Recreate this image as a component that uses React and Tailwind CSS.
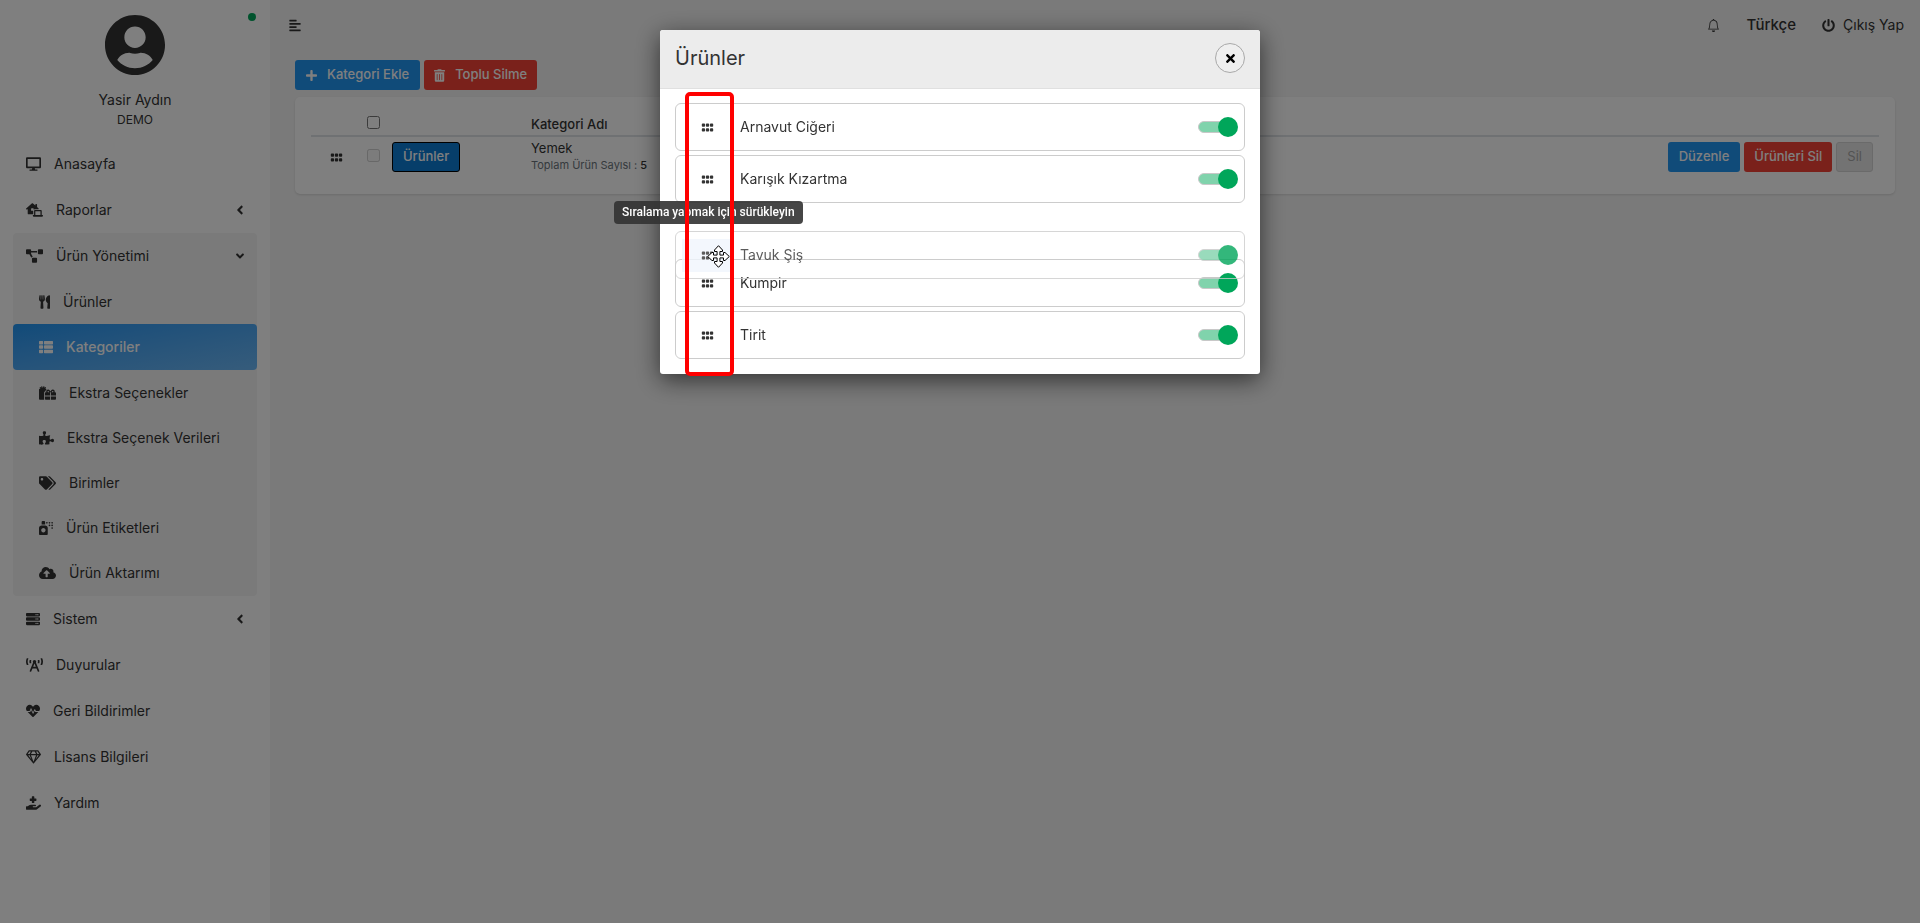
import { useState } from 'react';

import {
  FaDesktop, FaLaptopHouse, FaProjectDiagram, FaUtensils, FaThList, FaGifts, FaPuzzlePiece, FaTags,
  FaSprayCan, FaCloudUploadAlt, FaServer, FaBroadcastTower, FaHeartbeat, FaRegGem, FaHandHoldingMedical,
  FaAngleLeft, FaAngleDown, FaAlignLeft, FaPowerOff, FaPlus, FaTrashAlt, FaGripHorizontal, FaUserCircle, FaTimes,
} from 'react-icons/fa';
import { BsBell } from 'react-icons/bs';

const productLinks = [
  { label: 'Ürünler', icon: FaUtensils, size: 'w-[11px]' },
  { label: 'Kategoriler', icon: FaThList, size: 'w-[14px]', active: true },
  { label: 'Ekstra Seçenekler', icon: FaGifts, size: 'w-[17px]' },
  { label: 'Ekstra Seçenek Verileri', icon: FaPuzzlePiece, size: 'w-[15px]' },
  { label: 'Birimler', icon: FaTags, size: 'w-[17px]' },
  { label: 'Ürün Etiketleri', icon: FaSprayCan, size: 'w-[14px]' },
  { label: 'Ürün Aktarımı', icon: FaCloudUploadAlt, size: 'w-[17px]' },
];

const menu = [
  { label: 'Anasayfa', icon: FaDesktop, size: 'w-[15px]' },
  { label: 'Raporlar', icon: FaLaptopHouse, size: 'w-[17px]', more: true },
  { label: 'Ürün Yönetimi', icon: FaProjectDiagram, size: 'w-[17px]', children: productLinks },
  { label: 'Sistem', icon: FaServer, size: 'w-[14px]', more: true },
  { label: 'Duyurular', icon: FaBroadcastTower, size: 'w-[17px]' },
  { label: 'Geri Bildirimler', icon: FaHeartbeat, size: 'w-[14px]' },
  { label: 'Lisans Bilgileri', icon: FaRegGem, size: 'w-[15px]' },
  { label: 'Yardım', icon: FaHandHoldingMedical, size: 'w-[15px]' },
];

const products = [
  { name: 'Arnavut Ciğeri' },
  { name: 'Karışık Kızartma' },
  { name: 'Tavuk Şiş', dragging: true },
  { name: 'Kumpir' },
  { name: 'Tirit' },
];

const MenuLink = ({ item }) => {
  const Icon = item.icon;
  return (
    <a href="#" className="flex h-[46px] items-center gap-[13px] px-[13px]">
      <Icon className={`h-[14px] ${item.size}`} />
      <span className="flex-1">{item.label}</span>
      {item.more && <FaAngleLeft className="h-[14px] w-2" />}
      {item.children && <FaAngleDown className="h-[14px] w-2" />}
    </a>
  );
};

const SubLink = ({ item }) => {
  const Icon = item.icon;
  const look = item.active
    ? 'h-[46px] rounded bg-linear-to-br from-[#2196f3] to-[#6cb8f6] font-medium text-white'
    : 'h-[45px]';
  return (
    <a href="#" className={`flex items-center gap-[13px] px-[26px] ${look}`}>
      <Icon className={`h-[14px] ${item.size}`} />
      {item.label}
    </a>
  );
};

const Sidebar = () => (
  <aside className="relative w-[270px] shrink-0 bg-white px-[13px] text-sm">
    <span className="absolute right-[14px] top-[13px] size-2 rounded-full bg-[#00a65a]"></span>
    <div className="flex flex-col items-center pb-[11px] pt-[14px]">
      <FaUserCircle className="size-[62px]" />
      <p className="mt-[14px] leading-5">Yasir Aydın</p>
      <p className="text-xs leading-5">DEMO</p>
    </div>
    <ul>
      {menu.map((item) => (
        <li key={item.label} className={item.children ? 'rounded bg-[#f5f5f5]' : ''}>
          <MenuLink item={item} />
          {item.children && (
            <ul className="pb-px">
              {item.children.map((child) => (
                <li key={child.label}><SubLink item={child} /></li>
              ))}
            </ul>
          )}
        </li>
      ))}
    </ul>
  </aside>
);

const Topbar = () => (
  <header className="flex h-[50px] items-center pl-[19px] pr-4">
    <button type="button" aria-label="Menü"><FaAlignLeft className="h-[13px] w-3" /></button>
    <div className="ml-auto flex items-center">
      <button type="button" aria-label="Bildirimler"><BsBell className="size-[13px]" /></button>
      <button type="button" className="ml-[26px] text-[15px] font-medium">Türkçe</button>
      <a href="#" className="ml-[26px] flex items-center gap-2 text-sm">
        <FaPowerOff className="size-[13px]" />
        Çıkış Yap
      </a>
    </div>
  </header>
);

const CategoryTable = () => (
  <div className="rounded-[5px] bg-white px-4 pb-[17px] pt-4 shadow-sm">
    <table className="w-full text-[13px]">
      <thead>
        <tr className="h-[23px] border-b-2 border-[#dee2e6] text-left">
          <th className="w-[50px]"></th>
          <th className="w-[25px] text-center align-top">
            <input type="checkbox" aria-label="Tümünü seç" className="mt-[3px] block mx-auto size-[13px]" />
          </th>
          <th className="w-[139px]"></th>
          <th className="px-1.5 align-top font-medium leading-[22px]">Kategori Adı</th>
          <th></th>
        </tr>
      </thead>
      <tbody>
        <tr className="h-[41px]">
          <td><FaGripHorizontal className="mx-auto size-[13px]" /></td>
          <td className="align-top">
            <input type="checkbox" disabled aria-label="Yemek" className="mt-3 block mx-auto size-[13px]" />
          </td>
          <td className="px-1.5">
            <button type="button" className="h-[30px] rounded-[3px] border border-black bg-[#0c7cd5] px-[10px] font-medium text-white">Ürünler</button>
          </td>
          <td className="px-1.5 align-top">
            <p className="pt-0.5 leading-[18px]">Yemek</p>
            <p className="text-[11px] leading-4 text-[#6c757d]">Toplam Ürün Sayısı : <b className="font-medium text-[#333333]">5</b></p>
          </td>
          <td className="px-1.5">
            <div className="flex justify-end gap-1">
              <button type="button" className="h-[30px] rounded-[3px] bg-[#2196f3] px-[11px] font-medium text-white">Düzenle</button>
              <button type="button" className="h-[30px] rounded-[3px] bg-[#f44336] px-[10px] font-medium text-white">Ürünleri Sil</button>
              <button type="button" disabled className="h-[30px] rounded-[3px] border border-[#d4d4d4] bg-[#e6e6e6] px-[10px] text-[#a6a6a6]">Sil</button>
            </div>
          </td>
        </tr>
      </tbody>
    </table>
  </div>
);

const Toggle = ({ label }) => {
  const [on, setOn] = useState(true);
  return (
    <label className="relative flex h-5 w-10 items-center">
      <input
        type="checkbox"
        aria-label={label}
        checked={on}
        onChange={() => setOn(!on)}
        className="peer absolute inset-0 z-10 opacity-0"
      />
      <span className="h-3 w-9 rounded-full border border-[#c8c8c8] bg-[#e0e0e0] peer-checked:bg-[#80d3ac]"></span>
      <span className="absolute left-0 size-5 rounded-full bg-[#999999] peer-checked:left-5 peer-checked:bg-[#00a65a]"></span>
    </label>
  );
};

// arrows shown while a row is being moved
const MoveCursor = () => (
  <svg viewBox="0 0 23 23" className="pointer-events-none absolute left-[32px] top-[14px] z-30 size-[23px]">
    <path
      d="M11.5 .7 L15.5 5 V6.5 H12.9 V10.1 H16.5 V7.5 H18 L22.3 11.5 L18 15.5 H16.5 V12.9 H12.9 V16.5 H15.5 V18 L11.5 22.3 L7.5 18 V16.5 H10.1 V12.9 H6.5 V15.5 H5 L.7 11.5 L5 7.5 H6.5 V10.1 H10.1 V6.5 H7.5 V5 Z"
      fill="#fff"
      stroke="#000"
    />
  </svg>
);

const ProductRow = ({ product }) => {
  const { name, dragging } = product;
  return (
    <div className={`flex h-12 w-full items-center rounded-md border border-[#cccccc] px-1.5 ${dragging ? 'opacity-80' : ''}`}>
      <button
        type="button"
        aria-label={`${name} sırala`}
        className={`flex h-[33px] w-[50px] items-center justify-center ${dragging ? 'bg-[#f0f6fd]' : ''}`}
      >
        <FaGripHorizontal className="size-[13px]" />
      </button>
      <span className="ml-2 flex-1 text-sm">{name}</span>
      <Toggle label={name} />
    </div>
  );
};

const ProductsModal = () => (
  <div className="fixed inset-0 z-10 flex items-start justify-center bg-black/50 pt-[30px]">
    <div role="dialog" aria-label="Ürünler" className="relative w-[600px] rounded-[3px] bg-white shadow-[0_6px_24px_rgba(0,0,0,0.6)]">
      <div className="flex h-[59px] items-center justify-between rounded-t-[3px] border-b border-[#e0e0e0] bg-[#ececec] px-[15px] pb-0.5">
        <h2 className="text-xl leading-6">Ürünler</h2>
        <button type="button" aria-label="Kapat" className="flex size-[30px] items-center justify-center rounded-full border border-[#a9a9a9] bg-[#efefef] text-black">
          <FaTimes className="size-[13px]" />
        </button>
      </div>
      <ul className="flex flex-col gap-1 px-[15px] pb-[15px] pt-[14px]">
        {products.map((product) => (
          <li key={product.name} className={product.dragging ? 'relative h-12' : ''}>
            {product.dragging ? (
              <div className="absolute inset-x-0 top-6 z-10">
                <ProductRow product={product} />
                <MoveCursor />
              </div>
            ) : (
              <ProductRow product={product} />
            )}
          </li>
        ))}
      </ul>
      <div role="tooltip" className="absolute -left-[46px] top-[171px] whitespace-nowrap rounded bg-[#323232]/90 px-2 font-[Roboto,sans-serif] text-xs font-medium leading-[23px] text-white">
        Sıralama yapmak için sürükleyin
      </div>
      <div className="pointer-events-none absolute -bottom-0.5 left-[25px] top-[62px] z-20 w-[49px] rounded-[5px] border-4 border-[#ff0000]"></div>
    </div>
  </div>
);

export default function App() {
  return (
    <div className="flex min-h-screen bg-[#f5f5f5] font-[Inter,'Open_Sans',sans-serif] text-[#333333]">
      <Sidebar />
      <main className="min-w-0 flex-1">
        <Topbar />
        <div className="px-[25px] pt-[10px]">
          <div className="mb-[7px] flex gap-1 text-[13px] font-medium text-white">
            <button type="button" className="flex h-[30px] items-center gap-[10px] rounded-[3px] bg-[#2196f3] px-[11px]">
              <FaPlus className="h-[13px] w-[11px]" />
              Kategori Ekle
            </button>
            <button type="button" className="flex h-[30px] items-center gap-[10px] rounded-[3px] bg-[#f44336] px-[10px]">
              <FaTrashAlt className="h-[13px] w-[11px]" />
              Toplu Silme
            </button>
          </div>
          <CategoryTable />
        </div>
      </main>
      <ProductsModal />
    </div>
  );
}
